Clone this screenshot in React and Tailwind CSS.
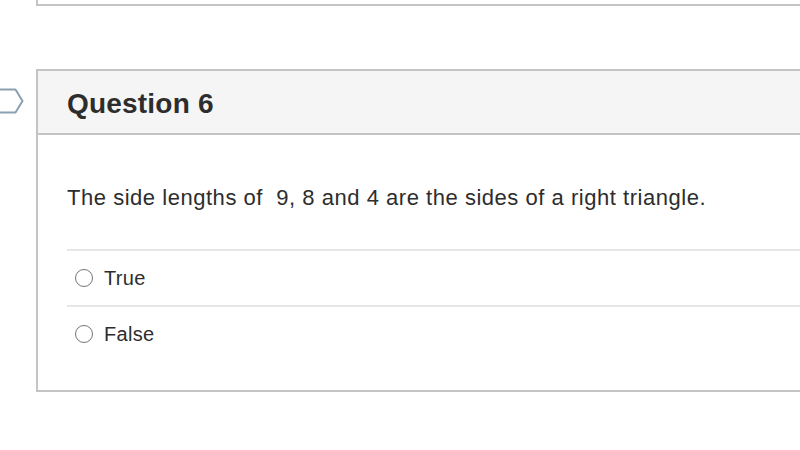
import React from 'react'

function Radio() {
  return <span className="w-[18px] h-[18px] rounded-full border-[1.5px] border-[#767676] bg-white shrink-0"></span>
}

export default function App() {
  const answers = ['True', 'False']
  return (
    <div className="w-[800px] h-[450px] bg-white overflow-hidden text-[#2d3b45]" style={{ fontFamily: '"Liberation Sans", Arial, sans-serif' }}>
      <div className="ml-[36px] h-[6px] border-l-2 border-b-2 border-[#c4c4c4]"></div>
      <div className="relative ml-[36px] mt-[63px] w-[800px] border-2 border-[#c4c4c4]">
        <svg className="absolute left-[-44px] top-[17px]" width="30" height="26" viewBox="0 0 30 26" fill="none">
          <path d="M1 1.5 H21.5 L28.5 13 L21.5 24.5 H1" stroke="#8aa0b0" strokeWidth="2" strokeLinejoin="round" />
        </svg>
        <div className="h-[64px] bg-[#f5f5f5] border-b-2 border-[#c4c4c4] flex items-center pl-[29px]">
          <h2 className="text-[28px] font-bold tracking-[0.2px] text-[#2d2d2d] pt-[3px]">Question 6</h2>
        </div>
        <div className="pl-[29px] pb-[29px]">
          <p className="pt-[48px] pb-[36px] text-[22px] tracking-[0.53px] leading-[30px] text-[#2d2d2d]">The side lengths of &nbsp;9, 8 and 4 are the sides of a right triangle.</p>
          {answers.map(a => (
            <div key={a} className="h-[56px] border-t-2 border-[#e6e6e6] flex items-center pl-[8px] gap-[11px]">
              <Radio />
              <span className="text-[20px] tracking-[0.3px] text-[#2d2d2d]">{a}</span>
            </div>
          ))}
        </div>
      </div>
    </div>
  )
}
